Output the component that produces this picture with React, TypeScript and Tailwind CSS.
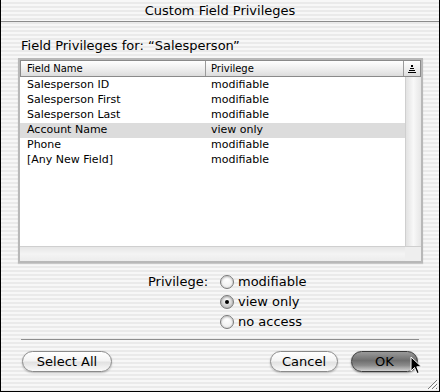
const stripes =
  "bg-[repeating-linear-gradient(to_bottom,#f7f7f7_0px,#f7f7f7_2px,#eaeaea_2px,#eaeaea_4px)]";

const rows = [
  { name: "Salesperson ID", priv: "modifiable" },
  { name: "Salesperson First", priv: "modifiable" },
  { name: "Salesperson Last", priv: "modifiable" },
  { name: "Account Name", priv: "view only", selected: true },
  { name: "Phone", priv: "modifiable" },
  { name: "[Any New Field]", priv: "modifiable" },
];

function Radio({ label, checked }: { label: string; checked?: boolean }) {
  return (
    <div className="flex items-center h-5 gap-[4px]">
      <span
        className={
          "relative w-[14px] h-[14px] rounded-full border border-[#7a7a7a] shadow-[inset_0_1px_2px_rgba(0,0,0,0.25)] " +
          (checked
            ? "bg-[radial-gradient(circle_at_50%_35%,#ffffff,#c8c8c8_70%,#9a9a9a)]"
            : "bg-[radial-gradient(circle_at_50%_30%,#ffffff,#f2f2f2_60%,#d0d0d0)]")
        }
      >
        {checked && (
          <span className="absolute left-[4px] top-[4px] w-[4px] h-[4px] rounded-full bg-black" />
        )}
      </span>
      <span className="text-[13px] text-black">{label}</span>
    </div>
  );
}

function Button({ label, w, primary }: { label: string; w: string; primary?: boolean }) {
  return (
    <div
      className={
        "h-[21px] rounded-full border flex items-center justify-center text-[13px] text-black " +
        w +
        " " +
        (primary
          ? "border-[#3a3a3a] bg-[linear-gradient(to_bottom,#9a9a9a_0%,#6e6e6e_45%,#8a8a8a_70%,#d0d0d0_100%)] shadow-[0_1px_2px_rgba(0,0,0,0.4)]"
          : "border-[#8a8a8a] bg-[linear-gradient(to_bottom,#ffffff_0%,#f4f4f4_45%,#e2e2e2_55%,#fafafa_100%)] shadow-[0_1px_2px_rgba(0,0,0,0.25)]")
      }
    >
      {label}
    </div>
  );
}

export default function App() {
  return (
    <div
      className={
        "relative w-[440px] h-[392px] border-x border-b border-black flex flex-col overflow-hidden " + stripes
      }
      style={{ fontFamily: '"DejaVu Sans", "Liberation Sans", sans-serif' }}
    >
      <div className="h-[22px] flex items-center justify-center border-b border-[#8c8c8c] text-[13px] text-black shrink-0">
        Custom Field Privileges
      </div>

      <div className="pl-[20px] pt-[15px] text-[13px] text-black leading-[18px]">
        Field Privileges for: “Salesperson”
      </div>

      <div className="ml-[17px] mt-[3px] w-[405px] h-[205px] border-2 border-[#b8b8b8] bg-white flex flex-col shadow-[0_1px_1px_rgba(0,0,0,0.15)]">
        <div className="flex h-[17px] border border-[#8a8a8a] bg-[linear-gradient(to_bottom,#ffffff,#ececec_60%,#dcdcdc)] text-[10px] text-black shrink-0">
          <div className="w-[185px] pl-[6px] flex items-center border-r border-[#9a9a9a]">Field Name</div>
          <div className="w-[198px] pl-[5px] flex items-center border-r border-[#9a9a9a]">Privilege</div>
          <div className="flex-1 flex flex-col items-center justify-center gap-[1px]">
            <span className="w-[2px] h-[2px] bg-black" />
            <span className="w-[4px] h-[1px] bg-black" />
            <span className="w-[6px] h-[1px] bg-black" />
            <span className="w-[8px] h-[1px] bg-black" />
          </div>
        </div>
        <div className="flex flex-1">
          <div className="flex-1 flex flex-col">
            <div className="flex-1 pt-[1px]">
              {rows.map((r) => (
                <div
                  key={r.name}
                  className={"flex h-[15px] items-center text-[11px] text-black " + (r.selected ? "bg-[#dcdcdc]" : "")}
                >
                  <div className="w-[185px] pl-[7px]">{r.name}</div>
                  <div className="pl-[6px]">{r.priv}</div>
                </div>
              ))}
            </div>
            <div className="h-[15px] border-t border-[#cfcfcf] bg-[linear-gradient(to_bottom,#e6e6e6,#f4f4f4_50%,#ececec)]" />
          </div>
          <div className="w-[16px] flex flex-col">
            <div className="flex-1 border-l border-[#cfcfcf] bg-[linear-gradient(to_right,#e2e2e2,#f8f8f8_50%,#e6e6e6)]" />
            <div className="h-[15px] border-t border-[#cfcfcf] bg-[#eeeeee]" />
          </div>
        </div>
      </div>

      <div className="flex mt-[9px] ml-[147px]">
        <div className="text-[13px] text-black h-5 flex items-center w-[72px]">Privilege:</div>
        <div className="flex flex-col">
          <Radio label="modifiable" />
          <Radio label="view only" checked />
          <Radio label="no access" />
        </div>
      </div>

      <div className="mx-[20px] mt-[7px] h-px bg-[#8e8e8e]" />

      <div className="flex items-center mt-[11px] px-[21px]">
        <Button label="Select All" w="w-[90px]" />
        <div className="flex-1" />
        <Button label="Cancel" w="w-[68px]" />
        <div className="w-[13px]" />
        <Button label="OK" w="w-[67px]" primary />
      </div>

      <svg className="absolute left-[409px] top-[356px]" width="13" height="20" viewBox="0 0 13 20">
        <path d="M1 1 L1 15 L4.5 11.5 L7 17.5 L9.2 16.6 L6.8 10.8 L11.5 10.8 Z" fill="black" stroke="white" strokeWidth="1" />
      </svg>

      <svg className="absolute right-[1px] bottom-[1px]" width="12" height="12" viewBox="0 0 12 12">
        <path d="M11 2 L2 11 M11 6 L6 11 M11 10 L10 11" stroke="#7a7a7a" strokeWidth="1" />
        <path d="M12 3 L3 12 M12 7 L7 12" stroke="#ffffff" strokeWidth="1" />
      </svg>
    </div>
  );
}
